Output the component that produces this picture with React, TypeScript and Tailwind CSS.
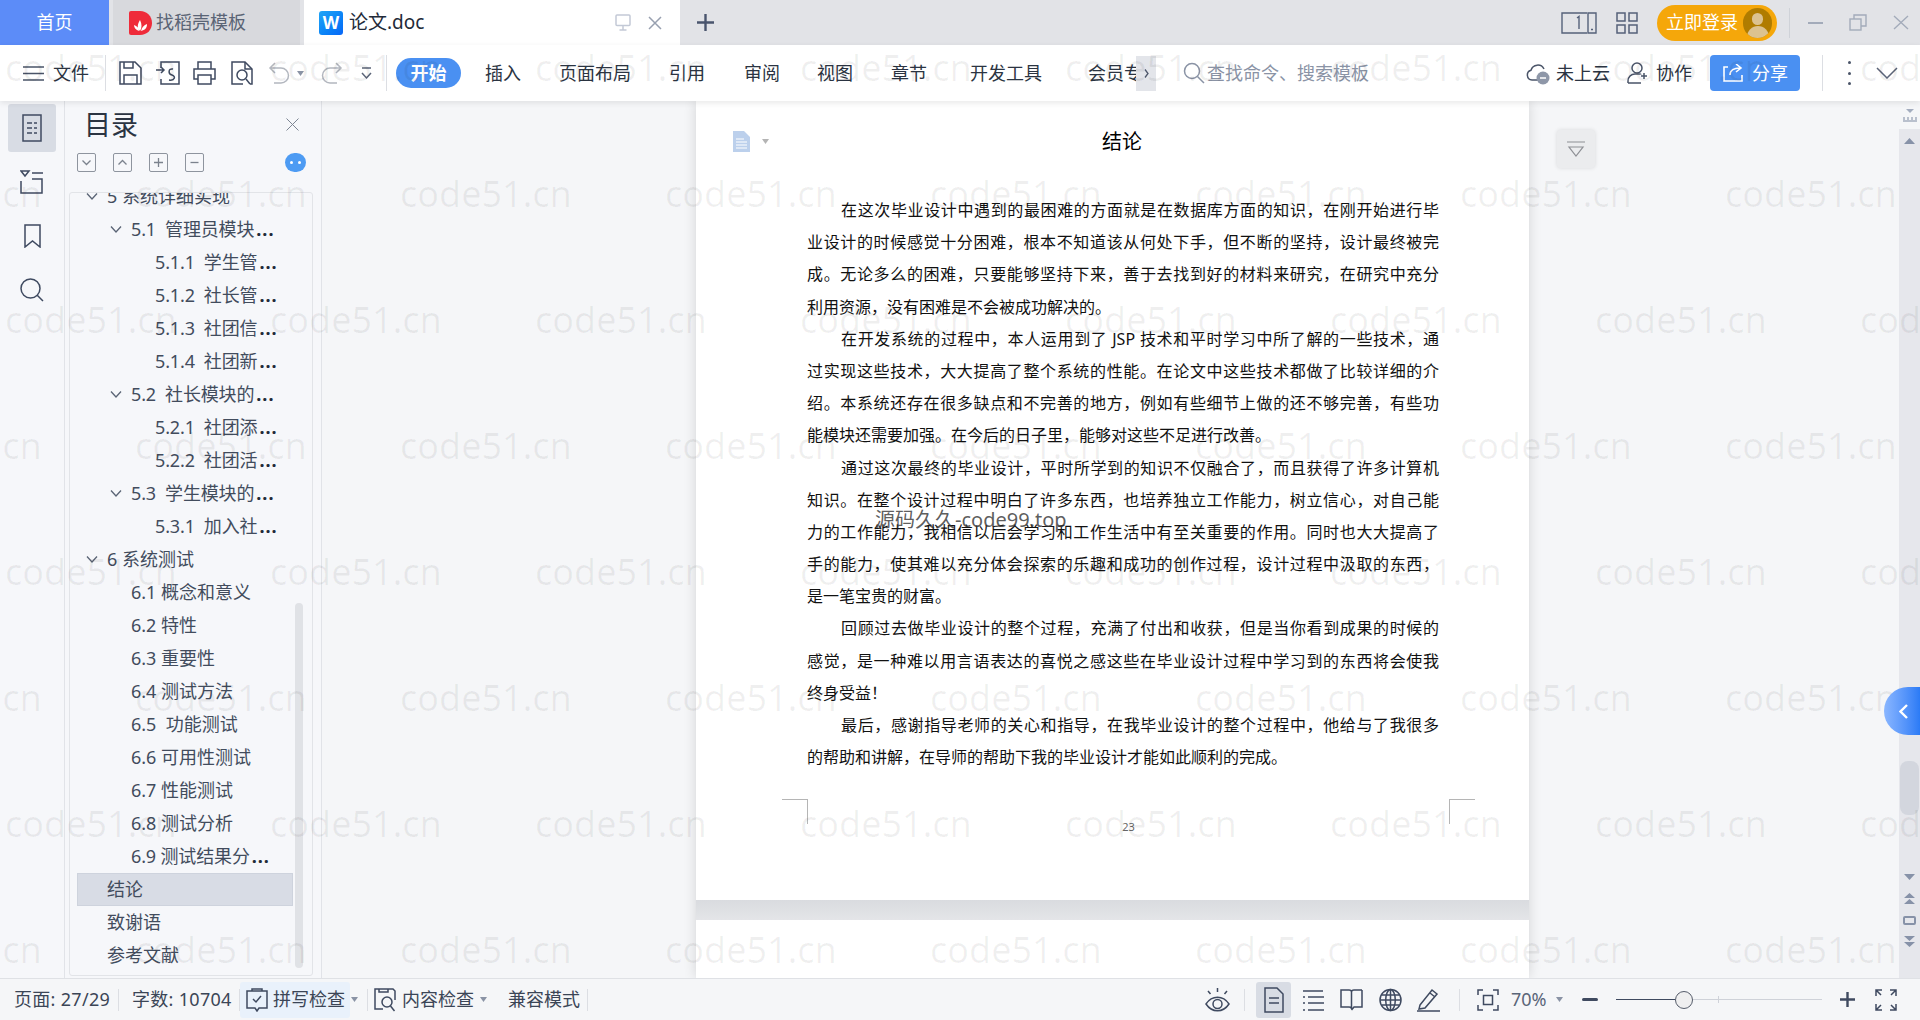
import React from 'react';

const ink = '#3f4a60';

const Svg: React.FC<{ w: number; h: number; c?: string; sw?: number; className?: string; children: React.ReactNode }> = ({ w, h, c = ink, sw = 1.5, className = '', children }) => (
    <svg width={w} height={h} viewBox={`0 0 ${w} ${h}`} fill="none" stroke={c} strokeWidth={sw} className={`shrink-0 ${className}`}>
        {children}
    </svg>
);

const Caret: React.FC<{ c?: string; className?: string }> = ({ c = '#8a93a5', className = '' }) => (
    <svg width="7" height="5" viewBox="0 0 7 5" className={`shrink-0 ${className}`}><path d="M0 0h7L3.5 5z" fill={c} /></svg>
);

const Vline: React.FC<{ className: string }> = ({ className }) => <div className={`w-px shrink-0 bg-[#dcdee3] ${className}`} />;

// ---- title bar
const TitleBar = () => (
    <div className="flex h-[45px] shrink-0 items-stretch bg-[#e2e3e7] text-[18px]">
        <div className="flex w-[109px] items-center justify-center bg-[#5c8cf8] text-white">首页</div>
        <div className="ml-[4px] flex w-[187px] items-center bg-[#d8d9dd] pl-[16px] text-[#5a6475]">
            <svg width="23" height="24" viewBox="0 0 23 24" className="shrink-0">
                <path d="M2 0h9c7 0 12 5 12 12s-5 12-12 12H2a2 2 0 0 1-2-2V2a2 2 0 0 1 2-2z" fill="#ef2b3a" />
                <path d="M11 20c-3-3-3-6 0-11 2 4 2 8 0 11zM12 20c1-4 3-6 6-7 0 4-2 6-6 7zM10 20c-3-1-5-3-5-6 3 1 5 3 5 6z" fill="#fff" />
            </svg>
            <span className="ml-[4px]">找稻壳模板</span>
        </div>
        <div className="ml-[4px] flex w-[376px] items-center bg-white pl-[15px] text-[#222a38]">
            <div className="flex h-[24px] w-[24px] shrink-0 items-center justify-center rounded-[3px] bg-gradient-to-br from-[#22a5f5] to-[#0b66f7] text-[17px] font-bold text-white">W</div>
            <span className="ml-[6px] text-[19px]">论文.doc</span>
            <Svg w={16} h={17} c="#c3c9d6" className="ml-auto">
                <rect x="1" y="1" width="14" height="10.5" rx="1" />
                <path d="M8 11.5V16M4.5 16h7" />
            </Svg>
            <Svg w={14} h={14} c="#98a0b0" className="ml-[17px] mr-[18px]">
                <path d="M1 1l12 12M13 1L1 13" />
            </Svg>
        </div>
        <div className="ml-[17px] flex items-center pb-[1px]">
            <Svg w={17} h={17} c="#4a556e" sw={2.4}><path d="M8.5 0v17M0 8.5h17" /></Svg>
        </div>
        <div className="ml-auto flex items-center pr-[11px]">
            <Svg w={36} h={22} c="#55617a" sw={1.4}>
                <path d="M26 1H1v20h25M27 1h8v20h-8z" />
                <path d="M16 6l2-1.5V17M30 17.5h2" />
            </Svg>
            <Svg w={22} h={22} c="#55617a" sw={1.5} className="ml-[19px]">
                <rect x="1" y="1" width="8" height="8" /><rect x="13" y="1" width="8" height="8" />
                <rect x="1" y="13" width="8" height="8" /><rect x="13" y="13" width="8" height="8" />
            </Svg>
            <div className="ml-[19px] flex h-[36px] w-[120px] items-center rounded-[18px] bg-[#f5a70a] pl-[9px] text-white">
                <span>立即登录</span>
                <div className="relative ml-[5px] h-[30px] w-[29px] overflow-hidden rounded-full bg-[#b07c00]">
                    <div className="mx-auto mt-[5px] h-[12px] w-[11px] rounded-full bg-[#dcc290]" />
                    <div className="mx-auto mt-[1px] h-[16px] w-[22px] rounded-t-full bg-[#dcc290]" />
                </div>
            </div>
            <div className="ml-[12px] h-[30px] w-px bg-[#cfd2d8]" />
            <Svg w={15} h={2} c="#a3abba" sw={2} className="ml-[18px]"><path d="M0 1h15" /></Svg>
            <Svg w={18} h={17} c="#a3abba" sw={1.4} className="ml-[26px]">
                <rect x="1" y="5" width="11" height="11" /><path d="M5 5V1h12v11h-5" />
            </Svg>
            <Svg w={16} h={15} c="#a3abba" sw={1.4} className="ml-[26px]"><path d="M1 1l14 13M15 1L1 14" /></Svg>
        </div>
    </div>
);

// ---- ribbon
const Ribbon = () => (
    <div className="relative z-10 flex h-[56px] shrink-0 items-center bg-white text-[18px] text-[#2b3442] shadow-[0_2px_6px_rgba(0,0,0,0.09)]">
        <Svg w={21} h={15} c="#4a5468" className="ml-[23px]"><path d="M0 1h21M0 7.5h21M0 14h21" /></Svg>
        <span className="ml-[9px]">文件</span>
        <Vline className="ml-[16px] h-[36px]" />
        <Svg w={23} h={24} className="ml-[13px]">
            <path d="M1 1h15l6 6v16H1zM5 23v-9h13v9M5 1v6h9V1" />
        </Svg>
        <Svg w={24} h={24} className="ml-[14px]">
            <path d="M5 7V1h18v22H5v-5" />
            <path d="M0 9h8M5 6l3 3-3 3M17 8c-5-1-5 5-1 6s3 6-3 5" />
        </Svg>
        <Svg w={23} h={24} className="ml-[13px]">
            <path d="M5 8V1h13v7M5 18H1V8h21v10h-4" />
            <rect x="5" y="14" width="13" height="9" />
        </Svg>
        <Svg w={22} h={24} className="ml-[15px]">
            <path d="M12 23H1V1h13l7 7v15h-2" /><path d="M14 1v7h7" />
            <circle cx="11" cy="14" r="5" /><path d="M15 18l4 5" />
        </Svg>
        <Svg w={22} h={24} c="#b3b7bf" className="ml-[15px]">
            <path d="M7 2L2 7l5 5M2 7h11a7 7 0 0 1 0 15H6" />
        </Svg>
        <Caret className="ml-[7px]" />
        <Svg w={23} h={24} c="#b3b7bf" className="ml-[16px]">
            <path d="M16 2l5 5-5 5M21 7H10a7 7 0 0 0 0 15h7" />
        </Svg>
        <Svg w={11} h={13} c="#5b6478" className="ml-[18px]"><path d="M1 1h9M1 6l4.5 5L10 6" /></Svg>
        <Vline className="ml-[14px] h-[36px]" />
        <div className="ml-[9px] flex h-[30px] w-[65px] items-center justify-center rounded-[15px] bg-[#4a90f2] font-bold text-white">开始</div>
        <span className="ml-[24px]">插入</span>
        <span className="ml-[38px]">页面布局</span>
        <span className="ml-[38px]">引用</span>
        <span className="ml-[39px]">审阅</span>
        <span className="ml-[37px]">视图</span>
        <span className="ml-[38px]">章节</span>
        <span className="ml-[43px]">开发工具</span>
        <div className="ml-[46px] w-[48px] overflow-hidden whitespace-nowrap">会员专享</div>
        <div className="flex h-[35px] w-[20px] items-center justify-center bg-[#e3e5ea]">
            <Svg w={5} h={9} c="#4d566a" sw={1.3}><path d="M1 .5l3 4-3 4" /></Svg>
        </div>
        <Svg w={22} h={22} c="#8a93a5" className="ml-[27px]"><circle cx="9" cy="9" r="7.5" /><path d="M14.5 14.5L21 21" /></Svg>
        <span className="ml-[2px] text-[#8a93a5]">查找命令、搜索模板</span>
        <Svg w={24} h={24} c="#4a5468" className="ml-[157px]">
            <path d="M12 19H6a5 5 0 0 1-1-9.800A7 7 0 0 1 18 8" />
            <circle cx="17" cy="17" r="6.500" fill="#8e97a8" stroke="none" />
            <path d="M14 17h6" stroke="#fff" />
        </Svg>
        <span className="ml-[6px]">未上云</span>
        <Svg w={21} h={22} c="#4a5468" className="ml-[17px]">
            <circle cx="10" cy="6" r="5" /><path d="M1 21v-2c0-4 3-7 7-7h4c1 0 2 .2 2 .5M1 21h13M17 11v6M14 14h6" />
        </Svg>
        <span className="ml-[8px]">协作</span>
        <div className="ml-[18px] flex h-[36px] w-[90px] items-center rounded-[4px] bg-[#4a90f2] pl-[13px] text-white">
            <Svg w={20} h={18} c="#fff" sw={1.6}>
                <path d="M5 3H1v14h18v-6M7 11c0-5 4-7 10-7M13 0l5 4-5 4" />
            </Svg>
            <span className="ml-[9px]">分享</span>
        </div>
        <Vline className="ml-[22px] h-[36px]" />
        <div className="ml-[25px] flex h-[24px] w-[3px] flex-col justify-between">
            <div className="h-[3px] w-[3px] rounded-full bg-[#4a5468]" />
            <div className="h-[3px] w-[3px] rounded-full bg-[#4a5468]" />
            <div className="h-[3px] w-[3px] rounded-full bg-[#4a5468]" />
        </div>
        <Svg w={22} h={12} c="#5b6478" className="ml-[25px]"><path d="M1 1l10 10L21 1" /></Svg>
    </div>
);

// ---- left rail
const Rail = () => (
    <div className="flex w-[65px] shrink-0 flex-col items-center border-r border-[#e1e3e8]">
        <div className="mt-[3px] flex h-[48px] w-[48px] items-center justify-center rounded-[3px] bg-[#d8dce4]">
            <Svg w={20} h={28}>
                <rect x="1" y="1" width="18" height="26" />
                <path d="M5 9h5M12 9h3M5 14h5M12 14h3M5 19h5M12 19h3" />
            </Svg>
        </div>
        <div className="mt-[3px] flex h-[54px] items-center justify-center">
            <Svg w={24} h={24}>
                <path d="M1 1h8L5 6zM12 3h11M1 11v12h21V9H12" />
            </Svg>
        </div>
        <div className="flex h-[54px] items-center justify-center">
            <Svg w={17} h={24}><path d="M1 1h15v22l-7.500-6L1 23z" /></Svg>
        </div>
        <div className="flex h-[54px] items-center justify-center">
            <Svg w={24} h={24}><circle cx="10.500" cy="10.500" r="9.500" /><path d="M17 17l6 6" /></Svg>
        </div>
    </div>
);

// ---- outline
type Row = { t: string; pad: string; chev?: boolean; more?: boolean; sel?: boolean };
const chev1 = 'pl-[16px]';
const chev2 = 'pl-[40px]';
const lv1 = 'pl-[37px]';
const lv2 = 'pl-[61px]';
const lv3 = 'pl-[85px]';

const rows: Row[] = [
    { t: '5 系统详细实现', pad: chev1, chev: true },
    { t: '5.1  管理员模块', pad: chev2, chev: true, more: true },
    { t: '5.1.1  学生管', pad: lv3, more: true },
    { t: '5.1.2  社长管', pad: lv3, more: true },
    { t: '5.1.3  社团信', pad: lv3, more: true },
    { t: '5.1.4  社团新', pad: lv3, more: true },
    { t: '5.2  社长模块的', pad: chev2, chev: true, more: true },
    { t: '5.2.1  社团添', pad: lv3, more: true },
    { t: '5.2.2  社团活', pad: lv3, more: true },
    { t: '5.3  学生模块的', pad: chev2, chev: true, more: true },
    { t: '5.3.1  加入社', pad: lv3, more: true },
    { t: '6 系统测试', pad: chev1, chev: true },
    { t: '6.1 概念和意义', pad: lv2 },
    { t: '6.2 特性', pad: lv2 },
    { t: '6.3 重要性', pad: lv2 },
    { t: '6.4 测试方法', pad: lv2 },
    { t: '6.5  功能测试', pad: lv2 },
    { t: '6.6 可用性测试', pad: lv2 },
    { t: '6.7 性能测试', pad: lv2 },
    { t: '6.8 测试分析', pad: lv2 },
    { t: '6.9 测试结果分', pad: lv2, more: true },
    { t: '结论', pad: lv1, sel: true },
    { t: '致谢语', pad: lv1 },
    { t: '参考文献', pad: lv1 },
];

const ToolBtn: React.FC<{ d: string }> = ({ d }) => (
    <div className="flex h-[19px] w-[19px] items-center justify-center rounded-[2px] border border-[#8e949e]">
        <Svg w={11} h={11} c="#7b828d" sw={1.3}><path d={d} /></Svg>
    </div>
);

const Outline = () => (
    <div className="flex w-[257px] shrink-0 flex-col border-r border-[#e1e3e8]">
        <div className="flex h-[47px] shrink-0 items-center pl-[19px]">
            <span className="text-[27px] leading-none text-[#2b3442]">目录</span>
            <Svg w={13} h={13} c="#7d8593" sw={1} className="ml-auto mr-[22px]"><path d="M.5.5l12 12M12.500.5l-12 12" /></Svg>
        </div>
        <div className="flex h-[29px] shrink-0 items-center gap-[17px] pl-[12px]">
            <ToolBtn d="M1.500 3.500l4 4 4-4" />
            <ToolBtn d="M1.500 7.500l4-4 4 4" />
            <ToolBtn d="M5.500 1v9M1 5.500h9" />
            <ToolBtn d="M1.500 5.500h8" />
            <div className="ml-[64px] flex h-[19px] w-[21px] items-center justify-center gap-[5px] rounded-full bg-[#4d9bf3]">
                <div className="h-[3px] w-[3px] rounded-full bg-white" />
                <div className="h-[3px] w-[3px] rounded-full bg-white" />
            </div>
        </div>
        <div className="relative mb-[2px] ml-[4px] mt-[15px] w-[244px] flex-1 overflow-hidden rounded-[3px] border border-[#e2e4e8] text-[18px] text-[#424c5d]">
            <div className="-mt-[13px]">
                {rows.map((r) => (
                    <div key={r.t} className={`flex h-[33px] items-center whitespace-pre ${r.sel ? 'ml-[7px] w-[216px] border border-[#ced3dd] bg-[#d8dce5] pl-[29px]' : r.pad}`}>
                        {r.chev && <Svg w={12} h={7} c="#5a6475" sw={1.3} className="mr-[9px]"><path d="M1 .5l5 5.500 5-5.500" /></Svg>}
                        <span className={r.more ? 'tracking-[-0.15px]' : ''}>{r.t}</span>
                        {r.more && <span className="ml-[2px] font-bold tracking-[1px] text-[#222a38]">...</span>}
                    </div>
                ))}
            </div>
            <div className="absolute left-[225px] top-[410px] h-[365px] w-[8px] rounded-[4px] bg-[#e0e2e6]" />
        </div>
    </div>
);

// ---- document body
const paras: { text: string; indent?: boolean; last?: boolean }[] = [
    { text: '在这次毕业设计中遇到的最困难的方面就是在数据库方面的知识，在刚开始进行毕', indent: true },
    { text: '业设计的时候感觉十分困难，根本不知道该从何处下手，但不断的坚持，设计最终被完' },
    { text: '成。无论多么的困难，只要能够坚持下来，善于去找到好的材料来研究，在研究中充分' },
    { text: '利用资源，没有困难是不会被成功解决的。', last: true },
    { text: '在开发系统的过程中，本人运用到了 JSP 技术和平时学习中所了解的一些技术，通', indent: true },
    { text: '过实现这些技术，大大提高了整个系统的性能。在论文中这些技术都做了比较详细的介' },
    { text: '绍。本系统还存在很多缺点和不完善的地方，例如有些细节上做的还不够完善，有些功' },
    { text: '能模块还需要加强。在今后的日子里，能够对这些不足进行改善。', last: true },
    { text: '通过这次最终的毕业设计，平时所学到的知识不仅融合了，而且获得了许多计算机', indent: true },
    { text: '知识。在整个设计过程中明白了许多东西，也培养独立工作能力，树立信心，对自己能' },
    { text: '力的工作能力，我相信以后会学习和工作生活中有至关重要的作用。同时也大大提高了' },
    { text: '手的能力，使其难以充分体会探索的乐趣和成功的创作过程，设计过程中汲取的东西，' },
    { text: '是一笔宝贵的财富。', last: true },
    { text: '回顾过去做毕业设计的整个过程，充满了付出和收获，但是当你看到成果的时候的', indent: true },
    { text: '感觉，是一种难以用言语表达的喜悦之感这些在毕业设计过程中学习到的东西将会使我' },
    { text: '终身受益！', last: true },
    { text: '最后，感谢指导老师的关心和指导，在我毕业设计的整个过程中，他给与了我很多', indent: true },
    { text: '的帮助和讲解，在导师的帮助下我的毕业设计才能如此顺利的完成。', last: true },
];

const Page = () => (
    <div className="h-[799px] shrink-0 bg-white">
        <div className="flex h-[93px] pl-[37px]">
            <svg width="17" height="21" viewBox="0 0 17 21" className="mt-[30px] shrink-0">
                <path d="M0 0h11l6 6v15H0z" fill="#bcd0ec" />
                <path d="M3 8h8M3 11h11M3 14h11M3 17h11" stroke="#fff" strokeWidth="1.200" />
            </svg>
            <Caret c="#b4b4b4" className="ml-[12px] mt-[38px]" />
            <div className="ml-[333px] mt-[27px] text-[20px] leading-[28px] text-black">结论</div>
        </div>
        <div className="ml-[111px] w-[632px] text-[16px] leading-[32.2px] text-[#111]">
            {paras.map((p) => (
                <div key={p.text} className={`h-[32.2px] whitespace-nowrap ${p.indent ? 'pl-[34px]' : ''} ${p.last ? '' : '[text-align:justify] [text-align-last:justify] [white-space:normal] [text-justify:inter-character]'}`}>
                    {p.text}
                </div>
            ))}
        </div>
        <div className="ml-[86px] mt-[26px] flex w-[693px] justify-between">
            <div className="h-[25px] w-[26px] border-r border-t border-[#b5b5b5]" />
            <span className="mt-[22px] text-[11px] leading-[12px] text-[#666]">23</span>
            <div className="h-[25px] w-[26px] border-l border-t border-[#b5b5b5]" />
        </div>
    </div>
);

const ScrollBar = () => (
    <div className="flex w-[21px] shrink-0 flex-col items-center">
        <div className="flex h-[28px] shrink-0 items-center">
            <svg width="14" height="13" viewBox="0 0 14 13"><path d="M3 0h8L7 4z" fill="#a4adbf" /><path d="M0 13V8h2v3h2V8h2v3h2V8h2v3h2V8h2v5z" fill="#b9c0cd" /></svg>
        </div>
        <div className="flex w-full flex-1 flex-col items-center bg-[#e6e7ec]">
            <svg width="11" height="6" viewBox="0 0 11 6" className="mt-[9px] shrink-0"><path d="M5.500 0L11 6H0z" fill="#8792a8" /></svg>
            <div className="mt-[617px] h-[54px] w-[19px] shrink-0 rounded-[8px] bg-[#d3d6de]" />
            <svg width="11" height="6" viewBox="0 0 11 6" className="mt-[59px] shrink-0"><path d="M0 0h11L5.500 6z" fill="#8792a8" /></svg>
            <svg width="11" height="12" viewBox="0 0 11 12" className="mt-[13px] shrink-0"><path d="M5.500 0L11 5H0zM5.500 6L11 11H0z" fill="#8792a8" /></svg>
            <div className="mt-[11px] h-[9px] w-[13px] shrink-0 rounded-[2px] border-2 border-[#8792a8]" />
            <svg width="11" height="12" viewBox="0 0 11 12" className="mt-[11px] shrink-0"><path d="M0 0h11L5.500 5zM0 6h11L5.500 11z" fill="#8792a8" /></svg>
        </div>
    </div>
);

const DocArea = () => (
    <div className="flex flex-1 overflow-hidden bg-[#f5f6f8]">
        <div className="ml-[374px] flex w-[833px] shrink-0 flex-col shadow-[0_0_12px_rgba(0,0,0,0.14)]">
            <Page />
            <div className="h-[20px] shrink-0 bg-gradient-to-b from-[#d9dbdf] to-[#e4e5e8]" />
            <div className="flex-1 bg-white" />
        </div>
        <div className="flex-1 pl-[28px] pt-[29px]">
            <div className="flex h-[38px] w-[38px] flex-col items-center justify-center rounded-[4px] bg-[#ebecee] shadow-[0_0_4px_rgba(0,0,0,0.12)]">
                <Svg w={18} h={16} c="#8d8f94" sw={1.2}><path d="M0 1h18M2 6h14l-7 9z" /></Svg>
            </div>
        </div>
        <ScrollBar />
    </div>
);

// ---- status bar
const StatusBar = () => (
    <div className="flex h-[42px] shrink-0 items-center border-t border-[#dfe1e5] bg-[#f5f6f8] text-[18px] text-[#3b4556]">
        <span className="ml-[14px] w-[96px] whitespace-nowrap tracking-[0.3px]">页面: 27/29</span>
        <Vline className="ml-[8px] h-[22px]" />
        <span className="ml-[13px] w-[100px] whitespace-nowrap tracking-[0.3px]">字数: 10704</span>
        <Vline className="ml-[7px] h-[22px]" />
        <div className="flex h-[36px] w-[110px] items-center rounded-[3px] bg-[#e9f1fb] pl-[6px]">
            <Svg w={22} h={24}>
                <path d="M1 3h20v17h-8l-2 3-2-3H1zM6 3v-2h10v2" /><path d="M7 11l3 3 5-6" />
            </Svg>
            <span className="ml-[5px] whitespace-nowrap">拼写检查</span>
        </div>
        <Caret className="ml-[1px]" />
        <Vline className="ml-[9px] h-[22px]" />
        <Svg w={22} h={24} className="ml-[6px]">
            <path d="M9 21H1V1h18l2 2v9M5 1v3h9V1" /><circle cx="13" cy="14" r="5" /><path d="M16.500 18l4 5" />
        </Svg>
        <span className="ml-[6px] whitespace-nowrap">内容检查</span>
        <Caret className="ml-[6px]" />
        <span className="ml-[21px] whitespace-nowrap">兼容模式</span>
        <Vline className="ml-[7px] h-[22px]" />
        <div className="ml-auto flex items-center pr-[23px]">
            <Svg w={25} h={24}>
                <path d="M1 16c6-9 17-9 23 0-6 9-17 9-23 0z" /><circle cx="12.500" cy="16" r="4.500" /><path d="M12.500 0v4M3 3l2.500 3M22 3l-2.500 3" />
            </Svg>
            <Vline className="ml-[14px] h-[22px]" />
            <div className="ml-[11px] flex h-[36px] w-[35px] items-center justify-center rounded-[3px] bg-[#d8dce4]">
                <Svg w={20} h={26}><path d="M1 1h12l6 6v18H1z" /><path d="M5 11h10M5 16h10" /></Svg>
            </div>
            <Svg w={22} h={22} className="ml-[11px]">
                <path d="M1 2h20M6 8h16M6 14h16M6 21h16M1 8h2M1 14h2M1 21h2" />
            </Svg>
            <Svg w={23} h={24} className="ml-[16px]">
                <path d="M1 2h8c1.500 0 2.500 1 2.500 2v17c0-1-1-2-2.500-2H1zM22 2h-8c-1.500 0-2.500 1-2.500 2M22 2v17h-8l-2.500 3" />
            </Svg>
            <Svg w={23} h={24} className="ml-[16px]">
                <circle cx="11.500" cy="12" r="10.500" /><ellipse cx="11.500" cy="12" rx="4.800" ry="10.500" /><path d="M1 12h21M2.500 7h18M2.500 17h18M11.500 1.500v21" />
            </Svg>
            <Svg w={24} h={24} className="ml-[15px]">
                <path d="M3 17L15 2l5 4L8 20l-6 1zM13 5l5 4M0 23h23" />
            </Svg>
            <Vline className="ml-[18px] h-[22px]" />
            <Svg w={22} h={22} className="ml-[17px]">
                <path d="M1 6V1h5M16 1h5v5M21 16v5h-5M6 21H1v-5" /><rect x="6.500" y="6.500" width="9" height="9" />
            </Svg>
            <span className="ml-[12px] w-[38px] text-[#5a6578]">70%</span>
            <Caret className="ml-[7px]" />
            <div className="ml-[19px] h-[3px] w-[16px] shrink-0 rounded bg-[#3f4a60]" />
            <div className="ml-[18px] flex w-[206px] items-center">
                <div className="h-[1.500px] w-[59px] bg-[#3f4a60]" />
                <div className="h-[18px] w-[18px] shrink-0 rounded-full border border-[#555c6a] bg-[#efeff0]" />
                <div className="relative h-px flex-1 bg-[#cfd2d9]">
                    <div className="absolute left-[25px] top-[-3px] h-[7px] w-px bg-[#cfd2d9]" />
                </div>
            </div>
            <Svg w={15} h={15} sw={2.400} className="ml-[18px]"><path d="M7.500 0v15M0 7.500h15" /></Svg>
            <Svg w={22} h={22} className="ml-[20px]">
                <path d="M1 7V1h6M1 1l5 5M21 7V1h-6M21 1l-5 5M1 15v6h6M1 21l5-5M21 15v6h-6M21 21l-5-5" />
            </Svg>
        </div>
    </div>
);

// ---- code51.cn watermark, lies over everything
const Watermark = () => {
    const offsets = ['ml-[5px]', '-ml-[130px]', 'ml-[5px]', '-ml-[130px]', 'ml-[5px]', '-ml-[130px]', 'ml-[5px]', '-ml-[130px]'];
    return (
        <div className="pointer-events-none absolute inset-0 z-20 overflow-hidden pt-[5px] text-[36px] text-black/[0.06] [font-family:'Noto_Sans',sans-serif]">
            {offsets.map((o, i) => (
                <div key={i} className={`flex h-[126px] items-center ${o}`}>
                    {Array.from({ length: 9 }).map((_, j) => (
                        <span key={j} className="w-[265px] shrink-0 whitespace-nowrap">code51.cn</span>
                    ))}
                </div>
            ))}
        </div>
    );
};

export default function App() {
    return (
        <div className="relative flex h-[1020px] w-[1920px] flex-col overflow-hidden bg-[#f6f7fa] [font-family:'Noto_Sans','Noto_Sans_CJK_SC',sans-serif]">
            <TitleBar />
            <Ribbon />
            <div className="flex min-h-0 flex-1">
                <Rail />
                <Outline />
                <DocArea />
            </div>
            <StatusBar />
            <Watermark />
            <div className="absolute left-[875px] top-[506px] z-20 whitespace-nowrap text-[20px] leading-[28px] text-[#333]/80">源码久久-code99.top</div>
            <div className="absolute left-[1884px] top-[687px] z-20 flex h-[48px] w-[36px] items-center justify-center rounded-l-[24px] bg-gradient-to-r from-[#8ab6ff] to-[#2b7bf6] pl-[2px]">
                <Svg w={9} h={15} c="#fff" sw={2.400}><path d="M8 1L1.500 7.500 8 14" /></Svg>
            </div>
        </div>
    );
}
